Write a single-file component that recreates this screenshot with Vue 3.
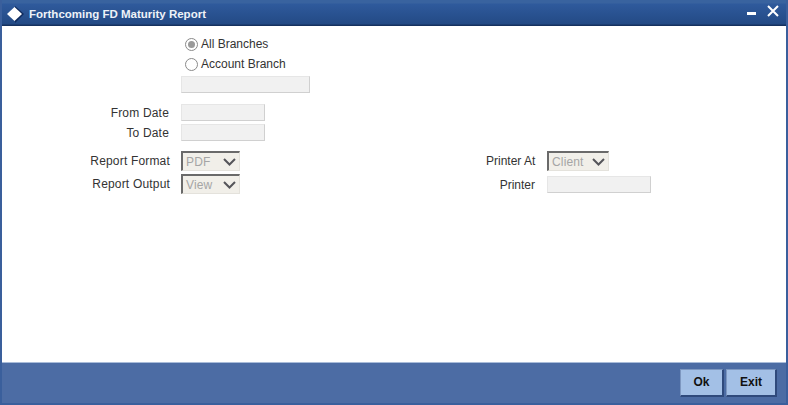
<script setup>
const branches = [
  { label: 'All Branches', checked: true },
  { label: 'Account Branch', checked: false }
]
</script>

<template>
  <div class="window">
    <header class="titlebar">
      <svg class="logo" width="20" height="20" viewBox="0 0 20 20">
        <path d="M8 2 L17 10 L8 19 Z" fill="#0f2a5c" />
        <path d="M7.5 3 L15 10 L7.5 17 L0 10 Z" fill="#fff" />
      </svg>
      <span class="title">Forthcoming FD Maturity Report</span>
      <span class="controls">
        <span class="minimize"></span>
        <svg width="12" height="12" viewBox="0 0 12 12">
          <path d="M1 1 L11 11 M11 1 L1 11" stroke="#fff" stroke-width="2" fill="none" />
        </svg>
      </span>
    </header>

    <main class="body">
      <div class="left">
        <div class="radios">
          <label v-for="b in branches" :key="b.label" class="radio-row">
            <span class="radio" :class="{ on: b.checked }"></span>
            <span>{{ b.label }}</span>
          </label>
          <div class="input branch-input"></div>
        </div>

        <div class="dates">
          <div class="row date-row">
            <span class="label">From Date</span>
            <div class="input date-input"></div>
          </div>
          <div class="row date-row">
            <span class="label">To Date</span>
            <div class="input date-input"></div>
          </div>
        </div>

        <div class="reports">
          <div class="row">
            <span class="label">Report Format</span>
            <div class="select">
              <span>PDF</span>
              <svg width="13" height="8" viewBox="0 0 13 8"><path d="M1 1 L6.5 6.5 L12 1" stroke="#55555a" stroke-width="2" fill="none" /></svg>
            </div>
          </div>
          <div class="row">
            <span class="label">Report Output</span>
            <div class="select">
              <span>View</span>
              <svg width="13" height="8" viewBox="0 0 13 8"><path d="M1 1 L6.5 6.5 L12 1" stroke="#55555a" stroke-width="2" fill="none" /></svg>
            </div>
          </div>
        </div>
      </div>

      <div class="right">
        <div class="row">
          <span class="label">Printer At</span>
          <div class="select client">
            <span>Client</span>
            <svg width="13" height="8" viewBox="0 0 13 8"><path d="M1 1 L6.5 6.5 L12 1" stroke="#55555a" stroke-width="2" fill="none" /></svg>
          </div>
        </div>
        <div class="row printer-row">
          <span class="label">Printer</span>
          <div class="input printer-input"></div>
        </div>
      </div>
    </main>

    <footer class="footer">
      <button class="btn">Ok</button>
      <button class="btn">Exit</button>
    </footer>
  </div>
</template>

<style>
html, body { margin: 0; background: #fff; }
</style>

<style scoped>
.window {
  width: 788px;
  height: 405px;
  box-sizing: border-box;
  display: flex;
  flex-direction: column;
  background: #fff;
  border-left: 2px solid #3a5f9c;
  border-right: 2px solid #3a5f9c;
  border-bottom: 2px solid #3a5f9c;
  font-family: "Liberation Sans", Arial, sans-serif;
  font-size: 12px;
  color: #333;
  overflow: hidden;
}
.titlebar {
  height: 26px;
  flex: none;
  box-sizing: border-box;
  display: flex;
  align-items: center;
  background: linear-gradient(#39639f 0, #39639f 3px, #2f5a9c 4px, #234a85 24px, #15315f 25px);
  color: #fff;
  font-weight: bold;
  font-size: 11.5px;
  padding-left: 5px;
  padding-top: 2px;
}
.logo { margin-top: -1px; flex: none; }
.title { margin-left: 2px; color: #eef2f8; }
.controls {
  margin-left: auto;
  margin-right: 7px;
  display: flex;
  align-items: flex-start;
  gap: 11px;
  margin-top: -6px;
}
.minimize {
  width: 9px;
  height: 3px;
  background: #fff;
  margin-top: 7px;
}
.body {
  flex: 1;
  display: flex;
  min-height: 0;
}
.left { width: 484px; flex: none; box-sizing: border-box; padding-top: 8px; }
.radios { padding-left: 179px; }
.radio-row { display: flex; align-items: center; height: 20px; color: #333; }
.radio {
  box-sizing: border-box;
  width: 13px;
  height: 13px;
  border: 1px solid #8a8a8a;
  border-radius: 50%;
  background: #fff;
  margin-left: 4px;
  margin-right: 3px;
  position: relative;
}
.radio.on::after {
  content: "";
  position: absolute;
  left: 2px;
  top: 2px;
  width: 7px;
  height: 7px;
  border-radius: 50%;
  background: #9a9a9a;
}
.input {
  box-sizing: border-box;
  height: 17px;
  background: #f1f1f1;
  border: 1px solid #e6e6e6;
  border-right-color: #d0d0d0;
  border-bottom-color: #d0d0d0;
}
.branch-input { width: 129px; margin-top: 2px; }
.dates { margin-top: 11px; display: flex; flex-direction: column; gap: 3px; }
.row { display: flex; align-items: center; }
.label { width: 168px; text-align: right; margin-right: 11px; flex: none; white-space: nowrap; letter-spacing: 0.18px; }
.date-row .label { width: 167px; margin-right: 12px; }
.date-input { width: 84px; }
.reports { margin-top: 10px; display: flex; flex-direction: column; gap: 3px; }
.select {
  box-sizing: border-box;
  width: 59px;
  height: 20px;
  background: #f1efe9;
  border-top: 2px solid #6a6a6a;
  border-left: 2px solid #6a6a6a;
  border-right: 1px solid #e4e2dc;
  border-bottom: 1px solid #e4e2dc;
  color: #a5a5a5;
  display: flex;
  align-items: center;
  justify-content: space-between;
  padding: 0 3px 0 3px;
  letter-spacing: 0.15px;
}
.right { flex: 1; padding-top: 125px; }
.right .label { width: 49px; margin-left: 0; margin-right: 12px; letter-spacing: 0; }
.client { width: 62px; }
.printer-row { margin-top: 5px; }
.printer-input { width: 104px; }
.footer {
  height: 41px;
  flex: none;
  box-sizing: border-box;
  background: #4c6ca4;
  border-top: 1px solid #a9bcd9;
  display: flex;
  align-items: center;
  justify-content: flex-end;
  gap: 2px;
  padding-right: 9px;
  padding-bottom: 1px;
}
.btn {
  box-sizing: border-box;
  width: 44px;
  height: 28px;
  padding: 0;
  background: #a3c0e6;
  border: 1px solid #7d97c0;
  border-right: 2px solid #2f4a7c;
  border-bottom: 2px solid #2f4a7c;
  color: #111;
  font: bold 12px "Liberation Sans", Arial, sans-serif;
}
.btn + .btn { width: 51px; }
</style>
